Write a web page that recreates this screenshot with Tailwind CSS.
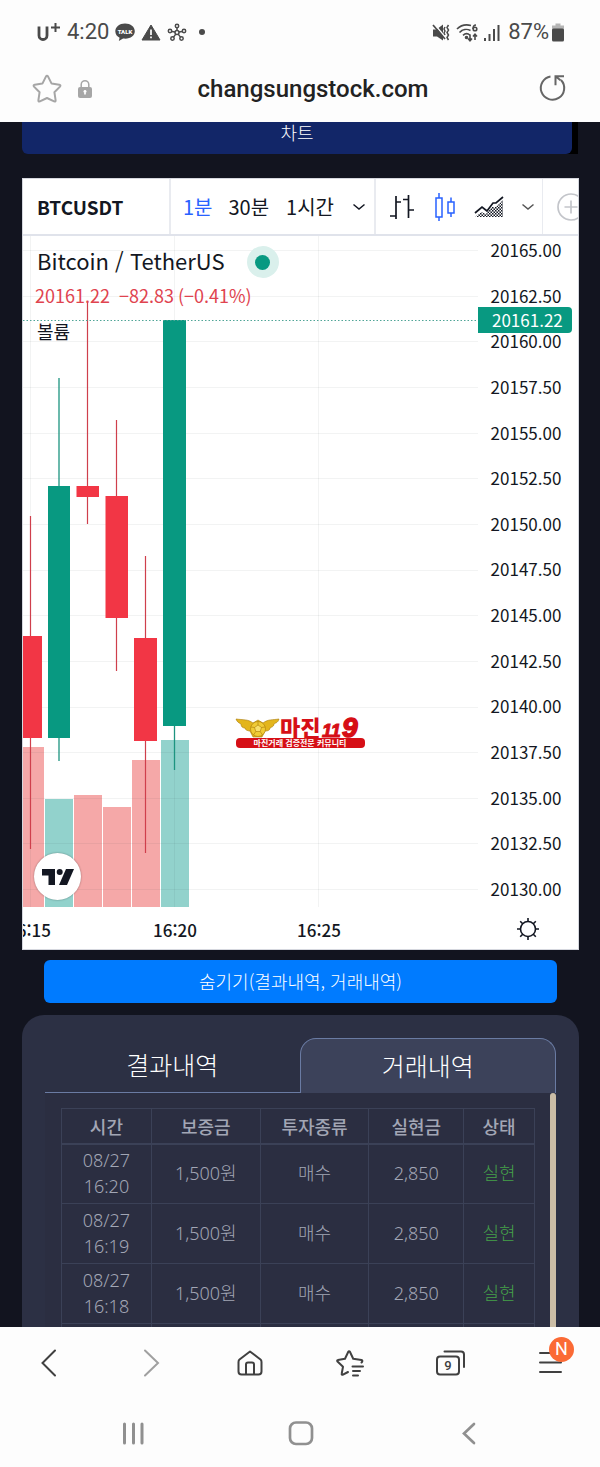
<!DOCTYPE html>
<html lang="ko">
<head>
<meta charset="utf-8">
<meta name="viewport" content="width=device-width, initial-scale=1">
<title>changsungstock.com</title>
<script src="https://cdn.jsdelivr.net/npm/@tailwindcss/browser@4"></script>
</head>
<body class="flex h-screen flex-col overflow-hidden bg-[#fdfdfd] font-['Noto_Sans_CJK_KR',sans-serif]">

<header class="shrink-0 font-[Roboto,'Noto_Sans_CJK_KR',sans-serif] text-[#4a4a4a]">
  <!-- Status bar -->
  <div class="flex h-16 items-center justify-between px-9">
    <div class="flex items-center">
      <svg class="h-6 w-6" viewBox="0 0 24 24" fill="none" stroke="#4a4a4a"><path d="M3 6.500v9a4 4 0 0 0 8 0v-9" stroke-width="2.800"/><path d="M19.500 3v9M15 7.500h9" stroke-width="2"/></svg>
      <span class="ml-[7px] text-[22px] leading-6">4:20</span>
      <svg class="ml-1.5 h-6 w-5" viewBox="0 0 20 24"><path d="M10 3.500C4.400 3.500.300 7 .300 11.300c0 3 1.700 5.200 4.300 6.500L3.800 21l4.300-2.400c6.600 1 11.700-2.700 11.700-7.300S15.600 3.500 10 3.500Z" fill="#4a4a4a"/><text x="10" y="13.500" text-anchor="middle" font-size="6" font-weight="900" fill="#fff">TALK</text></svg>
      <svg class="ml-1.5 h-6 w-5" viewBox="0 0 20 24"><path d="M10 5 19 20H1Z" fill="#4a4a4a" stroke="#4a4a4a" stroke-linejoin="round"/><path d="M10 9.500v5.500M10 16.500v1.700" stroke="#fff" stroke-width="1.700"/></svg>
      <svg class="ml-1.5 h-6 w-5" viewBox="0 0 20 24" fill="none" stroke="#4a4a4a" stroke-width="1.500"><circle cx="10" cy="12.500" r="2"/><circle cx="10" cy="6" r="1.700"/><circle cx="3" cy="11" r="1.700"/><circle cx="17" cy="11" r="1.700"/><circle cx="5.500" cy="18.500" r="1.700"/><circle cx="14.500" cy="18.500" r="1.700"/><path d="M10 7.700v2.800M4.700 11.400l3.400.600M15.300 11.400l-3.400.600M6.500 17.100l2.300-3M13.500 17.100l-2.300-3"/></svg>
      <span class="ml-3 size-1.5 rounded-full bg-[#4a4a4a]"></span>
    </div>
    <div class="flex items-center">
      <svg class="h-6 w-[18px]" viewBox="0 0 18 24"><path d="M1 9.500h3.500L11 4.500v16l-6-4H1Z" fill="#4a4a4a"/><path d="M2 3.500l11 13.500" stroke="#fdfdfd" stroke-width="1.500"/><path d="M1 5l12 14" stroke="#4a4a4a" stroke-width="1.700"/><path d="M13 7l-1 2 1 2-1 2 1 2M16.500 5l-1.500 2.500 1.500 2.500-1.500 2.500 1.500 2.500-1.500 2.500L16.500 20" fill="none" stroke="#4a4a4a" stroke-width="1.500"/></svg>
      <svg class="ml-1.5 h-6 w-[24px]" viewBox="0 0 24 24" fill="none" stroke="#4a4a4a" stroke-width="1.600"><path d="M1 9C5 5 10 4.200 15 5.500M3.500 12.500c3-3.200 7.500-3.800 11-2M7 15.300c2.200-2 5-2 7 0"/><circle cx="10.500" cy="17.500" r="1" fill="#4a4a4a"/><path d="M20 5c-2 0-3 1.500-3 4"/><circle cx="19" cy="9" r="1.800"/><path d="M14 14.500v6M12 18.500l2 2.300 2-2.300M19 20v-5.500M17 16.500l2-2.300 2 2.300"/></svg>
      <svg class="ml-1 h-6 w-4" viewBox="0 0 16 24" fill="#4a4a4a"><path d="M0 18h2v3H0zM4.500 14h2v7h-2zM9 9h2v12H9zM13.500 5h2v16h-2z"/></svg>
      <span class="ml-2 text-[22px] leading-6">87%</span>
      <svg class="ml-[3px] h-6 w-3" viewBox="0 0 12 24"><path d="M3.500 3.500h5v2H12v5H0v-5h3.500z" fill="#b5b5b5"/><rect y="8.500" width="12" height="13" rx="1.500" fill="#4a4a4a"/></svg>
    </div>
  </div>
  <!-- Address bar -->
  <div class="flex h-[58px] items-center justify-between px-8 pb-2">
    <div class="flex w-36 items-center gap-4">
      <button type="button" aria-label="북마크 추가"><svg class="block size-[30px]" viewBox="0 0 30 30" fill="none" stroke="#a6a6a6" stroke-width="2" stroke-linejoin="round"><path d="M13.900 2.600q1.100-1.500 2.200 0l3.500 7 7.700 1.100q1.800.400.700 1.900l-5.600 5.600 1.200 8q.100 1.700-1.500 1.200L15 24l-7.100 3.400q-1.600.500-1.500-1.200l1.200-8L2 12.600q-1.100-1.500.700-1.900l7.700-1.100Z"/></svg></button>
      <svg class="h-5 w-[14px]" viewBox="0 0 14 20"><path d="M3.200 9V5.500a3.800 3.800 0 0 1 7.600 0V9" fill="none" stroke="#a6a6a6" stroke-width="1.500"/><rect y="8" width="14" height="11" rx="2" fill="#a6a6a6"/><path d="M7 11v4.500M5.500 12.500h3" stroke="#fff" stroke-width="1.700"/></svg>
    </div>
    <span class="text-2xl leading-7 font-medium text-[#222]">changsungstock.com</span>
    <div class="flex w-[118px] justify-end">
      <button type="button" aria-label="새로고침"><svg class="block size-[30px]" viewBox="0 0 30 30" fill="none" stroke="#666" stroke-width="2"><path d="M12.500 2.500A11.700 11.700 0 1 0 23 6M26 2.200H17.500v9M17.500 2.200l5 4"/></svg></button>
    </div>
  </div>
</header>

<main class="min-h-0 flex-1 overflow-hidden bg-[#12141f] px-[22px]">
  <div class="h-8 bg-[#12141f] bg-linear-to-l from-black from-50% to-transparent to-50% pr-1.5">
    <h2 class="h-8 rounded-b-md bg-[#122668] text-center text-lg leading-5 font-light text-white">차트</h2>
  </div>

  <!-- Price chart -->
  <section class="mt-6 mr-[-1px] border border-[#d5d7de] bg-white text-[#131722]">
    <div class="flex h-[57px] items-center overflow-hidden border-b-2 border-[#e0e3eb] text-xl leading-7">
      <button type="button" class="h-full w-[148px] shrink-0 border-r-2 border-[#e9ebf0] pl-3.5 text-left text-[19px] font-bold">BTCUSDT</button>
      <div class="flex h-full w-[205px] shrink-0 items-center border-r-2 border-[#e9ebf0] pl-3">
        <button type="button" class="text-[#2962ff]">1분</button>
        <button type="button" class="ml-4">30분</button>
        <button type="button" class="ml-[17px]">1시간</button>
        <button type="button" class="ml-[17px]" aria-label="시간 간격"><svg class="block h-4 w-4" viewBox="0 0 16 16" fill="none" stroke="#131722" stroke-width="1.500"><path d="M2.500 5.500 8 10l5.500-4.500"/></svg></button>
      </div>
      <div class="flex h-full w-[167px] shrink-0 items-center border-r border-[#e9ebf0] pl-3.5">
        <button type="button" aria-label="바"><svg class="block h-7 w-6" viewBox="0 0 24 28" fill="none" stroke="#131722" stroke-width="1.700"><path d="M6 3v23M0 23h6M6 9h5M18.500 2v23M13 6.500h5.500M18.500 17H24"/></svg></button>
        <button type="button" class="ml-5" aria-label="캔들"><svg class="block h-8 w-[22px]" viewBox="0 0 22 32" fill="none" stroke="#2962ff" stroke-width="1.500"><path d="M2 7h6v19H2zM5 2v5M5 26v4M14 11h6v11h-6zM17 6.500V11M17 22v4"/></svg></button>
        <button type="button" class="ml-[18px]" aria-label="영역"><svg class="block h-6 w-[30px]" viewBox="0 0 30 24"><defs><pattern id="dots" width="3" height="3" patternUnits="userSpaceOnUse"><path d="M0 0h1.500v1.500H0zM1.500 1.500H3V3H1.500z" fill="#131722"/></pattern></defs><path d="M1 22l6-5 5 2 6-7h4l7-7v17Z" fill="url(#dots)"/><path d="M1 18l7-6 5 4 6-8h3l7-6" fill="none" stroke="#131722" stroke-width="1.700"/></svg></button>
        <button type="button" class="ml-4" aria-label="차트 종류"><svg class="block h-4 w-4" viewBox="0 0 16 16" fill="none" stroke="#555" stroke-width="1.500"><path d="M2.500 5.500 8 10l5.500-4.500"/></svg></button>
      </div>
      <button type="button" class="ml-3.5 shrink-0" aria-label="비교"><svg class="block size-7" viewBox="0 0 28 28" fill="none" stroke="#c3c5ca" stroke-width="1.700"><circle cx="14" cy="14" r="13"/><path d="M14 7.500v13M7.500 14h13"/></svg></button>
    </div>

    <div class="flex h-[672px]">
      <div class="relative min-w-0 flex-1">
        <svg class="block h-full w-full" aria-hidden="true">
          <path d="M0 511h21v160H0zM51 559h28v112H51zM80 571h28v100H80zM109 524h28v147h-28z" fill="#f5a8a8"/>
          <path d="M22 563h28v108H22zM138 504h28v167h-28z" fill="#92d2cc"/>
          <g stroke="#2a2e39" stroke-opacity=".06">
            <path d="M7.500 0v671M151.500 0v671M295.500 0v671"/>
            <line x2="100%" y1="14.500" y2="14.500"/><line x2="100%" y1="60.500" y2="60.500"/><line x2="100%" y1="105.500" y2="105.500"/><line x2="100%" y1="151.500" y2="151.500"/><line x2="100%" y1="197.500" y2="197.500"/><line x2="100%" y1="242.500" y2="242.500"/><line x2="100%" y1="288.500" y2="288.500"/><line x2="100%" y1="334.500" y2="334.500"/><line x2="100%" y1="379.500" y2="379.500"/><line x2="100%" y1="425.500" y2="425.500"/><line x2="100%" y1="471.500" y2="471.500"/><line x2="100%" y1="516.500" y2="516.500"/><line x2="100%" y1="562.500" y2="562.500"/><line x2="100%" y1="607.500" y2="607.500"/><line x2="100%" y1="653.500" y2="653.500"/>
          </g>
          <path d="M7.500 280v333M64.500 66v222M93.500 184v251M122.500 320v297" stroke="#cf3f4c" stroke-width="1.200"/>
          <path d="M36 142v383M151.500 84v450" stroke="#1d9480" stroke-width="1.300"/>
          <path d="M0 400h19v102H0zM53.500 250H76v11H53.500zM82.500 260H105v122H82.500zM111 402h23v103h-23z" fill="#f23645"/>
          <path d="M25 250h22v252H25zM140 84h23v406h-23z" fill="#089981"/>
          <line x2="100%" y1="84.500" y2="84.500" stroke="#4fa597" stroke-dasharray="1.500 2"/>
        </svg>

        <div class="absolute top-2.5 left-3.5 flex items-center">
          <span class="pb-1 text-[22px] leading-[26px] whitespace-nowrap">Bitcoin / TetherUS</span>
          <span class="ml-[22px] flex size-8 items-center justify-center rounded-full bg-[#daf0ec]"><span class="size-[15px] rounded-full bg-[#089981]"></span></span>
        </div>
        <div class="absolute top-[47px] left-3 flex gap-[9px] text-lg leading-6 whitespace-nowrap text-[#e0434f]">
          <span>20161.22</span><span>−82.83 (−0.41%)</span>
        </div>
        <div class="absolute top-[83px] left-3.5 text-lg leading-6">볼륨</div>

        <svg class="absolute top-[480px] left-[212px] h-8 w-[132px] overflow-visible" viewBox="0 0 132 32" font-family="'Noto Sans CJK KR',sans-serif">
          <g fill="#e3b51c" stroke="#a97a08" stroke-width=".6"><path d="M1 3c7 1 12 0 17 4l5-3 5 3c5-4 10-3 16-4-1 4-4 4-5 5 0 3-3 3-4 4 0 3-4 3-5 3l-3 6H18l-3-6c-2 0-5-1-5-3-2 0-4-1-4-4-2-1-4-2-5-5Z"/><circle cx="23" cy="13" r="7.500" fill="#f0cb35"/><path d="M23 9l3.500 2.500-1.300 4h-4.400l-1.300-4ZM23 5.500V9M30 11l-3.500.500M27.500 19l-2.300-3.500M18.500 19l2.300-3.500M16 11l3.500.500" fill="#f8df6a"/></g>
          <rect x="1" y="22" width="129" height="10" rx="4" fill="#d60f16"/>
          <text x="45" y="20" font-size="22" font-weight="900" fill="#d60f16">마진</text>
          <text x="87" y="21" font-size="18" font-weight="700" font-style="italic" fill="#d60f16" stroke="#d60f16" font-family="'Liberation Sans',sans-serif">11</text>
          <text x="107" y="21" font-size="28" font-weight="700" font-style="italic" fill="#d60f16" stroke="#d60f16" stroke-width="1.500" font-family="'Liberation Sans',sans-serif">9</text>
          <text x="65" y="30" font-size="8" font-weight="700" text-anchor="middle" fill="#fff">마진거래 검증전문 커뮤니티</text>
        </svg>

        <a href="#" aria-label="TradingView" class="absolute bottom-2 left-[11px] flex size-[47px] items-center justify-center rounded-full bg-white shadow-[0_0_2px_rgba(0,0,0,0.4)]">
          <svg class="h-4 w-8" viewBox="0 0 32 16" fill="#131722"><path d="M0 0h13v16H6.500V6.500H0z"/><circle cx="17.700" cy="3" r="3"/><path d="M24 0h8l-7 16h-8z"/></svg>
        </a>
      </div>

      <div class="relative w-[100px] shrink-0">
        <ol class="flex h-full flex-col justify-between pt-0.5 pb-[7px] pr-1 text-center text-[17px] leading-6">
          <li>20165.00</li><li>20162.50</li><li>20160.00</li><li>20157.50</li><li>20155.00</li><li>20152.50</li><li>20150.00</li><li>20147.50</li><li>20145.00</li><li>20142.50</li><li>20140.00</li><li>20137.50</li><li>20135.00</li><li>20132.50</li><li>20130.00</li>
        </ol>
        <span class="absolute top-[71px] left-0 h-[26px] w-[94px] rounded-r-sm bg-[#089981] pl-3.5 text-[17px] leading-[26px] text-white">20161.22</span>
      </div>
    </div>

    <div class="flex h-[41px] items-center">
      <div class="relative h-full flex-1 overflow-hidden text-[17px] leading-[44px] font-medium">
        <span class="absolute left-1.5 -translate-x-1/2">16:15</span>
        <span class="absolute left-[152px] -translate-x-1/2">16:20</span>
        <span class="absolute left-[296px] -translate-x-1/2">16:25</span>
      </div>
      <div class="flex w-[100px] justify-center">
        <button type="button" aria-label="차트 설정"><svg class="block size-6" viewBox="0 0 24 24" fill="none" stroke="#131722" stroke-width="1.600"><circle cx="12" cy="12" r="7.500"/><path d="M12 1v3.500M12 19.500V23M1 12h3.500M19.500 12H23M4.200 4.200l2.500 2.500M17.300 17.300l2.500 2.500M19.800 4.200l-2.500 2.500M6.700 17.300l-2.500 2.500"/></svg></button>
      </div>
    </div>
  </section>

  <div class="mt-2.5 pr-[21px] pl-[22px]">
    <button type="button" class="block h-[43px] w-full rounded-md bg-[#007bff] pb-0.5 text-lg leading-7 font-light text-white">숨기기(결과내역, 거래내역)</button>
  </div>

  <!-- Trade history -->
  <section class="mt-3 mr-[-1px] rounded-t-[22px] bg-[#2c3044] px-[23px] pt-[23px]">
    <div class="flex h-[55px] text-[25px] leading-9 font-light text-white" role="tablist">
      <button type="button" role="tab" aria-selected="false" class="flex-1 border-b border-[#6a7ba3] pb-0.5">결과내역</button>
      <button type="button" role="tab" aria-selected="true" class="flex-1 rounded-t-2xl border border-b-0 border-[#6a7ba3] bg-[#3c425a] pb-0.5">거래내역</button>
    </div>
    <div class="flex h-[240px] gap-[15px] overflow-hidden bg-[#2b2e41] pl-4">
      <table class="mt-[15px] flex-1 table-fixed border-collapse self-start text-center text-lg leading-[26px] font-light text-[#a2a6b5] font-['Noto_Sans','Noto_Sans_CJK_KR',sans-serif] [&_td]:border [&_td]:border-[#3b4157] [&_td]:p-0 [&_td]:pb-0.5 [&_th]:border [&_th]:border-b-2 [&_th]:border-[#3b4157]">
        <colgroup><col class="w-[19%]"><col class="w-[23%]"><col class="w-[23%]"><col class="w-[20%]"><col class="w-[15%]"></colgroup>
        <thead><tr class="h-[35px] font-['Noto_Sans_CJK_KR',sans-serif]"><th class="font-medium">시간</th><th class="font-medium">보증금</th><th class="font-medium">투자종류</th><th class="font-medium">실현금</th><th class="font-medium">상태</th></tr></thead>
        <tbody>
          <tr class="h-[60px]"><td>08/27<br>16:20</td><td>1,500원</td><td>매수</td><td>2,850</td><td class="text-[#45a049]">실현</td></tr>
          <tr class="h-[60px]"><td>08/27<br>16:19</td><td>1,500원</td><td>매수</td><td>2,850</td><td class="text-[#45a049]">실현</td></tr>
          <tr class="h-[60px]"><td>08/27<br>16:18</td><td>1,500원</td><td>매수</td><td>2,850</td><td class="text-[#45a049]">실현</td></tr>
          <tr class="h-[60px]"><td></td><td></td><td></td><td></td><td></td></tr>
        </tbody>
      </table>
      <div class="w-1.5 shrink-0 rounded-t-sm bg-[#cbbda6]"></div>
    </div>
  </section>
</main>

<footer class="shrink-0 font-[Roboto,sans-serif]">
  <nav class="flex h-[71px] items-center justify-between px-[34px]" aria-label="브라우저 도구">
    <button type="button" aria-label="뒤로"><svg class="block size-[30px]" viewBox="0 0 30 30" fill="none" stroke="#404040" stroke-width="2" stroke-linecap="round"><path d="M21 2.500 8.500 15 21 27.500"/></svg></button>
    <button type="button" aria-label="앞으로"><svg class="block size-[30px]" viewBox="0 0 30 30" fill="none" stroke="#a0a0a0" stroke-width="2" stroke-linecap="round"><path d="M11 2.500 24 15 11 27.500"/></svg></button>
    <button type="button" aria-label="홈"><svg class="block size-[30px]" viewBox="0 0 30 30" fill="none" stroke="#404040" stroke-width="2" stroke-linejoin="round"><path d="M15 3.500 4.500 11.500Q3.500 12.300 3.500 14v9.500q0 3 3 3h17q3 0 3-3V14q0-1.700-1-2.500ZM11 26.500V16.500q0-2 2-2h4q2 0 2 2v10"/></svg></button>
    <button type="button" aria-label="북마크"><svg class="block size-[30px]" viewBox="0 0 30 30" fill="none" stroke="#404040" stroke-width="2" stroke-linecap="round" stroke-linejoin="round"><path d="M13 24l-5 2.700c-.800.400-1.500-.100-1.300-1l1.300-7L2.500 13.500c-.600-.700-.400-1.400.400-1.500l7.100-1.200 3.300-7c.300-.800 1.200-.800 1.600 0l3.300 7 8.300 1.200c1 .200 1.100 1 .500 2l-.500.500M17.500 18.500H28M18 23h7M18 27.500h5"/></svg></button>
    <button type="button" aria-label="탭 9개"><svg class="block size-[30px]" viewBox="0 0 30 30" fill="none" stroke="#404040" stroke-width="2" stroke-linecap="round"><rect x="1" y="8.500" width="22" height="18" rx="3"/><path d="M8.500 3.500H25q3 0 3 3V19"/><text x="12" y="22" text-anchor="middle" font-size="13" font-weight="500" fill="#404040" stroke="none">9</text></svg></button>
    <button type="button" class="relative" aria-label="메뉴"><svg class="block size-[30px]" viewBox="0 0 30 30" stroke="#404040" stroke-width="2" stroke-linecap="round"><path d="M4 5h21M4 14.500h21M4 24h21"/></svg><span class="absolute -top-[11px] left-[13px] flex size-[25px] items-center justify-center rounded-full bg-[#fb6a35] text-lg leading-none text-white">N</span></button>
  </nav>
  <nav class="flex h-[69px] items-center justify-between px-[117px]" aria-label="시스템 탐색">
    <button type="button" aria-label="최근 앱"><svg class="block size-8" viewBox="0 0 32 32" stroke="#909090" stroke-width="3" stroke-linecap="round"><path d="M7.500 7v19M16.500 7v19M25 7v19"/></svg></button>
    <button type="button" aria-label="홈 화면"><svg class="block size-8" viewBox="0 0 32 32" fill="none" stroke="#909090" stroke-width="2.700"><rect x="6" y="5.500" width="22" height="21.500" rx="6"/></svg></button>
    <button type="button" aria-label="이전"><svg class="block size-8" viewBox="0 0 32 32" fill="none" stroke="#909090" stroke-width="2.700" stroke-linecap="round"><path d="M23 7 13 16.500 23 26"/></svg></button>
  </nav>
</footer>
</body>
</html>
